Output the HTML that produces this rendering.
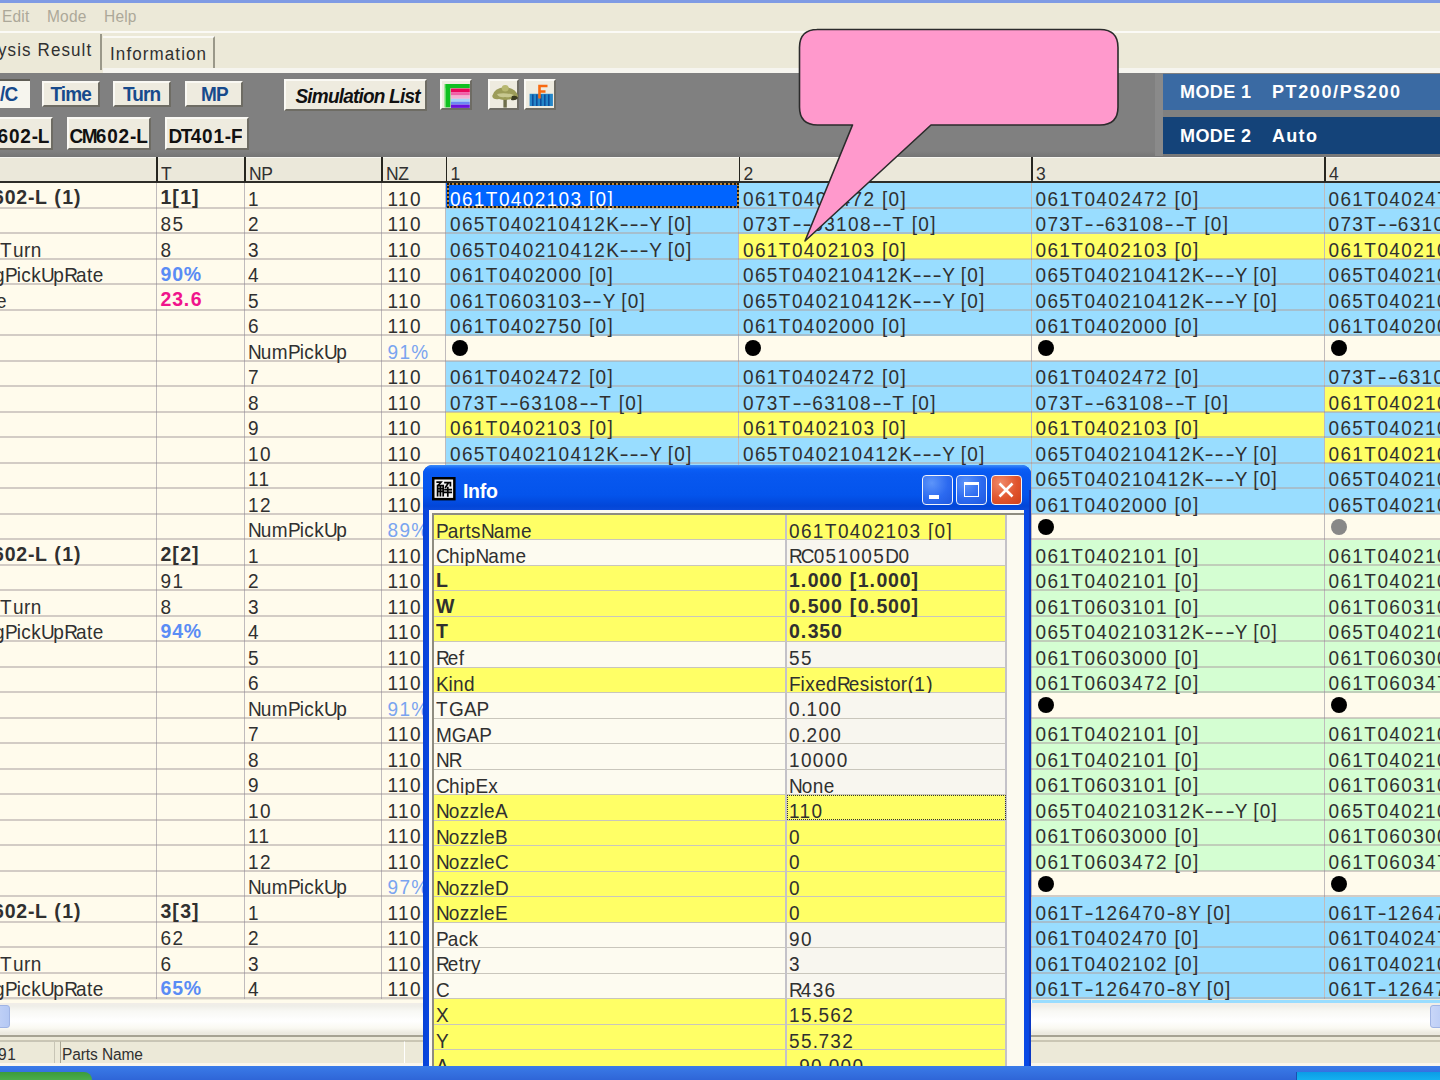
<!DOCTYPE html><html><head><meta charset="utf-8"><style>
*{margin:0;padding:0;box-sizing:border-box}
html,body{width:1440px;height:1080px;overflow:hidden;background:#ECE9D8;font-family:"Liberation Sans", sans-serif;}
.ab{position:absolute}
.t{position:absolute;white-space:pre;font-size:19px;letter-spacing:0;color:#303030;line-height:20px;transform:scaleY(1.06);transform-origin:0 16px}
.b{font-weight:bold;letter-spacing:0.3px;font-size:19.5px;margin-top:-2.5px}
.h{display:inline-block;width:10.2px;text-align:center;transform:scaleX(1.45)}
.btn{position:absolute;background:#EEEBDF;border-top:2px solid #FAF9F4;border-left:2px solid #FAF9F4;border-right:2px solid #6E6C64;border-bottom:2px solid #6E6C64;}
</style></head><body>
<div class="ab" style="left:0;top:0;width:1440px;height:3px;background:#7F9BE4"></div>
<div class="t" style="left:2px;top:7px;color:#ACA899;font-size:15.5px;letter-spacing:0.2px">Edit</div>
<div class="t" style="left:47px;top:7px;color:#ACA899;font-size:15.5px;letter-spacing:0.2px">Mode</div>
<div class="t" style="left:104px;top:7px;color:#ACA899;font-size:15.5px;letter-spacing:0.2px">Help</div>
<div class="ab" style="left:0;top:31px;width:1440px;height:2px;background:#FBFAF6"></div>
<div class="ab" style="left:103px;top:68px;width:1337px;height:4.5px;background:#F6F5EF"></div>
<div class="ab" style="left:100px;top:34px;width:2px;height:36px;background:#9A9889"></div>
<div class="t" style="left:-2px;top:41.2px;font-size:17px;letter-spacing:1.1px">ysis Result</div>
<div class="ab" style="left:103px;top:36px;width:112px;height:32px;border-top:2px solid #FAF9F4;border-right:2px solid #9A9889;"></div>
<div class="t" style="left:110px;top:44.5px;font-size:17px;letter-spacing:1.1px">Information</div>
<div class="ab" style="left:0;top:73px;width:1440px;height:83.5px;background:linear-gradient(#808080 0px,#808080 78px,#767676 83.5px)"></div>
<div class="ab" style="left:-4px;top:79px;width:33.5px;height:28.5px;background:#F6F5EE;border-top:2px solid #5F5D55;border-left:2px solid #5F5D55;"></div>
<div class="btn" style="left:41.5px;top:81px;width:58px;height:26px"></div>
<div class="btn" style="left:113px;top:81px;width:58px;height:26px"></div>
<div class="btn" style="left:185px;top:81px;width:58px;height:26px"></div>
<div class="btn" style="left:283.5px;top:79px;width:143.5px;height:31.5px"></div>
<div class="btn" style="left:439.7px;top:79.2px;width:32px;height:31px"></div>
<div class="btn" style="left:487.8px;top:79.2px;width:31.6px;height:31px"></div>
<div class="btn" style="left:523.8px;top:79.2px;width:32.5px;height:31px"></div>
<div class="btn" style="left:-20px;top:117px;width:73px;height:32.5px"></div>
<div class="btn" style="left:67px;top:117px;width:84px;height:32.5px"></div>
<div class="btn" style="left:165px;top:117px;width:84px;height:32.5px"></div>
<div class="t b" style="left:0px;top:87.5px;color:#174A8C;font-size:19px;letter-spacing:-0.9px;">/C</div>
<div class="t b" style="left:50.5px;top:87.5px;color:#174A8C;font-size:19px;letter-spacing:-0.9px;">Time</div>
<div class="t b" style="left:123px;top:87.5px;color:#174A8C;font-size:19px;letter-spacing:-0.9px;">Turn</div>
<div class="t b" style="left:201px;top:87.5px;color:#174A8C;font-size:19px;letter-spacing:-0.9px;">MP</div>
<div class="t b" style="left:295.5px;top:89.0px;color:#111;font-size:19px;letter-spacing:-0.9px;font-style:italic;letter-spacing:-0.8px">Simulation List</div>
<div class="t b" style="left:-2.5px;top:129px;color:#111;font-size:19px;letter-spacing:-0.9px;"><span style="letter-spacing:0.8px">6</span><span style="letter-spacing:0.8px">0</span><span style="letter-spacing:0.8px">2</span><span style="letter-spacing:-0.2px">-</span><span style="letter-spacing:-1.6px">L</span></div>
<div class="t b" style="left:69.5px;top:129px;color:#111;font-size:19px;letter-spacing:-0.9px;"><span style="letter-spacing:-1.6px">C</span><span style="letter-spacing:-1.6px">M</span><span style="letter-spacing:0.8px">6</span><span style="letter-spacing:0.8px">0</span><span style="letter-spacing:0.8px">2</span><span style="letter-spacing:-0.2px">-</span><span style="letter-spacing:-1.6px">L</span></div>
<div class="t b" style="left:168.5px;top:129px;color:#111;font-size:19px;letter-spacing:-0.9px;"><span style="letter-spacing:-1.6px">D</span><span style="letter-spacing:-1.6px">T</span><span style="letter-spacing:0.8px">4</span><span style="letter-spacing:0.8px">0</span><span style="letter-spacing:0.8px">1</span><span style="letter-spacing:-0.2px">-</span><span style="letter-spacing:-1.6px">F</span></div>
<svg class="ab" style="left:0;top:0" width="600" height="120" viewBox="0 0 600 120">
<rect x="445" y="84" width="24.8" height="4.2" fill="#10C020"/>
<rect x="445.5" y="84" width="4.9" height="23.4" fill="#10C020"/>
<rect x="444.5" y="84" width="1.2" height="23.4" fill="#60E060"/>
<rect x="450.9" y="88.5" width="18.9" height="3.6" fill="#E8085C"/>
<rect x="450.9" y="92.1" width="18.9" height="3.4" fill="#F060A8"/>
<rect x="450.9" y="95.5" width="18.9" height="3.3" fill="#F4B0D4"/>
<rect x="450.9" y="98.8" width="18.9" height="2.9" fill="#A8D4F8"/>
<rect x="450.9" y="101.7" width="18.9" height="3" fill="#6C88F4"/>
<rect x="450.9" y="104.7" width="18.9" height="3.2" fill="#6A12DC"/>
<rect x="503.4" y="98" width="3.4" height="9.6" fill="#6E6E4A"/>
<path d="M492.2,96 Q494,88 505,87 Q516,88 518,96 Q517,100 511,99 Q505,101 499,99 Q493,100 492.2,96 Z" fill="#9C9C58"/>
<path d="M497,94 Q505,92 514,95 Q511,98 505,97 Q499,98 497,94 Z" fill="#C8C890"/>
<path d="M512,96 Q517,95 518,98 Q516,101 511,100 Z" fill="#3A3A20"/>
<ellipse cx="505.2" cy="88.2" rx="3.4" ry="3.2" fill="#B8B870"/>
<rect x="529.6" y="93.8" width="23.3" height="12.2" fill="#2486C8"/>
<g fill="#0E4E9C"><rect x="532" y="94.5" width="1.6" height="11.5"/><rect x="536" y="94.5" width="1.6" height="11.5"/><rect x="540" y="94.5" width="1.6" height="11.5"/><rect x="544" y="94.5" width="1.6" height="11.5"/><rect x="548" y="94.5" width="1.6" height="11.5"/></g>
<path d="M539.5,98.5 V86 H547.5 M539.5,91.5 H545.5" stroke="#F86A10" stroke-width="2.6" fill="none"/>
</svg>
<div class="ab" style="left:1155px;top:73px;width:8px;height:83px;background:#8A8A8A"></div>
<div class="ab" style="left:1163px;top:73.5px;width:277px;height:36.5px;background:#3A6AA3"></div>
<div class="ab" style="left:1163px;top:117px;width:277px;height:36.75px;background:#144379"></div>
<div class="t b" style="left:1180px;top:84.5px;color:#fff;font-size:18px;letter-spacing:0.4px">MODE 1</div>
<div class="t b" style="left:1272px;top:84.5px;color:#fff;font-size:18px;letter-spacing:1.6px">PT200/PS200</div>
<div class="t b" style="left:1180px;top:128px;color:#fff;font-size:18px;letter-spacing:0.4px">MODE 2</div>
<div class="t b" style="left:1272px;top:128px;color:#fff;font-size:18px;letter-spacing:1.3px">Auto</div>
<div class="ab" style="left:0;top:156.5px;width:1440px;height:26px;background:#EBE8DA;border-top:1px solid #F7F6F0"></div>
<div class="ab" style="left:0;top:181px;width:1440px;height:2px;background:#2E2D28"></div>
<div class="ab" style="left:156.0px;top:157px;width:1.5px;height:25px;background:#26251F"></div>
<div class="t" style="left:161.0px;top:163.5px;font-size:17.5px;letter-spacing:-0.3px">T</div>
<div class="ab" style="left:244.0px;top:157px;width:1.5px;height:25px;background:#26251F"></div>
<div class="t" style="left:249.0px;top:163.5px;font-size:17.5px;letter-spacing:-0.3px">NP</div>
<div class="ab" style="left:381.0px;top:157px;width:1.5px;height:25px;background:#26251F"></div>
<div class="t" style="left:386.0px;top:163.5px;font-size:17.5px;letter-spacing:-0.3px">NZ</div>
<div class="ab" style="left:445.5px;top:157px;width:1.5px;height:25px;background:#26251F"></div>
<div class="t" style="left:450.5px;top:163.5px;font-size:17.5px;letter-spacing:-0.3px">1</div>
<div class="ab" style="left:738.5px;top:157px;width:1.5px;height:25px;background:#26251F"></div>
<div class="t" style="left:743.5px;top:163.5px;font-size:17.5px;letter-spacing:-0.3px">2</div>
<div class="ab" style="left:1031.0px;top:157px;width:1.5px;height:25px;background:#26251F"></div>
<div class="t" style="left:1036.0px;top:163.5px;font-size:17.5px;letter-spacing:-0.3px">3</div>
<div class="ab" style="left:1324.0px;top:157px;width:1.5px;height:25px;background:#26251F"></div>
<div class="t" style="left:1329.0px;top:163.5px;font-size:17.5px;letter-spacing:-0.3px">4</div>
<div class="ab" style="left:0;top:183px;width:1440px;height:816px;background:#FFFBEC"></div>
<div class="ab" style="left:446px;top:182.5px;width:292px;height:25.5px;background:#0064FF"></div>
<div class="ab" style="left:446px;top:208.0px;width:292px;height:25.5px;background:#99DDFF"></div>
<div class="ab" style="left:446px;top:233.5px;width:292px;height:25.5px;background:#99DDFF"></div>
<div class="ab" style="left:446px;top:259.0px;width:292px;height:25.5px;background:#99DDFF"></div>
<div class="ab" style="left:446px;top:284.5px;width:292px;height:25.5px;background:#99DDFF"></div>
<div class="ab" style="left:446px;top:310.0px;width:292px;height:25.5px;background:#99DDFF"></div>
<div class="ab" style="left:446px;top:361.0px;width:292px;height:25.5px;background:#99DDFF"></div>
<div class="ab" style="left:446px;top:386.5px;width:292px;height:25.5px;background:#99DDFF"></div>
<div class="ab" style="left:446px;top:412.0px;width:292px;height:25.5px;background:#FFFF66"></div>
<div class="ab" style="left:446px;top:437.5px;width:292px;height:25.5px;background:#99DDFF"></div>
<div class="ab" style="left:446px;top:463.0px;width:292px;height:25.5px;background:#99DDFF"></div>
<div class="ab" style="left:739px;top:182.5px;width:292px;height:25.5px;background:#99DDFF"></div>
<div class="ab" style="left:739px;top:208.0px;width:292px;height:25.5px;background:#99DDFF"></div>
<div class="ab" style="left:739px;top:233.5px;width:292px;height:25.5px;background:#FFFF66"></div>
<div class="ab" style="left:739px;top:259.0px;width:292px;height:25.5px;background:#99DDFF"></div>
<div class="ab" style="left:739px;top:284.5px;width:292px;height:25.5px;background:#99DDFF"></div>
<div class="ab" style="left:739px;top:310.0px;width:292px;height:25.5px;background:#99DDFF"></div>
<div class="ab" style="left:739px;top:361.0px;width:292px;height:25.5px;background:#99DDFF"></div>
<div class="ab" style="left:739px;top:386.5px;width:292px;height:25.5px;background:#99DDFF"></div>
<div class="ab" style="left:739px;top:412.0px;width:292px;height:25.5px;background:#FFFF66"></div>
<div class="ab" style="left:739px;top:437.5px;width:292px;height:25.5px;background:#99DDFF"></div>
<div class="ab" style="left:739px;top:463.0px;width:292px;height:25.5px;background:#99DDFF"></div>
<div class="ab" style="left:1032px;top:182.5px;width:292px;height:25.5px;background:#99DDFF"></div>
<div class="ab" style="left:1032px;top:208.0px;width:292px;height:25.5px;background:#99DDFF"></div>
<div class="ab" style="left:1032px;top:233.5px;width:292px;height:25.5px;background:#FFFF66"></div>
<div class="ab" style="left:1032px;top:259.0px;width:292px;height:25.5px;background:#99DDFF"></div>
<div class="ab" style="left:1032px;top:284.5px;width:292px;height:25.5px;background:#99DDFF"></div>
<div class="ab" style="left:1032px;top:310.0px;width:292px;height:25.5px;background:#99DDFF"></div>
<div class="ab" style="left:1032px;top:361.0px;width:292px;height:25.5px;background:#99DDFF"></div>
<div class="ab" style="left:1032px;top:386.5px;width:292px;height:25.5px;background:#99DDFF"></div>
<div class="ab" style="left:1032px;top:412.0px;width:292px;height:25.5px;background:#FFFF66"></div>
<div class="ab" style="left:1032px;top:437.5px;width:292px;height:25.5px;background:#99DDFF"></div>
<div class="ab" style="left:1032px;top:463.0px;width:292px;height:25.5px;background:#99DDFF"></div>
<div class="ab" style="left:1032px;top:488.5px;width:292px;height:25.5px;background:#99DDFF"></div>
<div class="ab" style="left:1032px;top:539.5px;width:292px;height:25.5px;background:#D4FED2"></div>
<div class="ab" style="left:1032px;top:565.0px;width:292px;height:25.5px;background:#D4FED2"></div>
<div class="ab" style="left:1032px;top:590.5px;width:292px;height:25.5px;background:#D4FED2"></div>
<div class="ab" style="left:1032px;top:616.0px;width:292px;height:25.5px;background:#D4FED2"></div>
<div class="ab" style="left:1032px;top:641.5px;width:292px;height:25.5px;background:#D4FED2"></div>
<div class="ab" style="left:1032px;top:667.0px;width:292px;height:25.5px;background:#D4FED2"></div>
<div class="ab" style="left:1032px;top:718.0px;width:292px;height:25.5px;background:#D4FED2"></div>
<div class="ab" style="left:1032px;top:743.5px;width:292px;height:25.5px;background:#D4FED2"></div>
<div class="ab" style="left:1032px;top:769.0px;width:292px;height:25.5px;background:#D4FED2"></div>
<div class="ab" style="left:1032px;top:794.5px;width:292px;height:25.5px;background:#D4FED2"></div>
<div class="ab" style="left:1032px;top:820.0px;width:292px;height:25.5px;background:#D4FED2"></div>
<div class="ab" style="left:1032px;top:845.5px;width:292px;height:25.5px;background:#D4FED2"></div>
<div class="ab" style="left:1032px;top:896.5px;width:292px;height:25.5px;background:#99DDFF"></div>
<div class="ab" style="left:1032px;top:922.0px;width:292px;height:25.5px;background:#99DDFF"></div>
<div class="ab" style="left:1032px;top:947.5px;width:292px;height:25.5px;background:#99DDFF"></div>
<div class="ab" style="left:1032px;top:973.0px;width:292px;height:25.5px;background:#99DDFF"></div>
<div class="ab" style="left:1325px;top:182.5px;width:115px;height:25.5px;background:#99DDFF"></div>
<div class="ab" style="left:1325px;top:208.0px;width:115px;height:25.5px;background:#99DDFF"></div>
<div class="ab" style="left:1325px;top:233.5px;width:115px;height:25.5px;background:#FFFF66"></div>
<div class="ab" style="left:1325px;top:259.0px;width:115px;height:25.5px;background:#99DDFF"></div>
<div class="ab" style="left:1325px;top:284.5px;width:115px;height:25.5px;background:#99DDFF"></div>
<div class="ab" style="left:1325px;top:310.0px;width:115px;height:25.5px;background:#99DDFF"></div>
<div class="ab" style="left:1325px;top:361.0px;width:115px;height:25.5px;background:#99DDFF"></div>
<div class="ab" style="left:1325px;top:386.5px;width:115px;height:25.5px;background:#FFFF66"></div>
<div class="ab" style="left:1325px;top:412.0px;width:115px;height:25.5px;background:#99DDFF"></div>
<div class="ab" style="left:1325px;top:437.5px;width:115px;height:25.5px;background:#FFFF66"></div>
<div class="ab" style="left:1325px;top:463.0px;width:115px;height:25.5px;background:#99DDFF"></div>
<div class="ab" style="left:1325px;top:488.5px;width:115px;height:25.5px;background:#99DDFF"></div>
<div class="ab" style="left:1325px;top:539.5px;width:115px;height:25.5px;background:#D4FED2"></div>
<div class="ab" style="left:1325px;top:565.0px;width:115px;height:25.5px;background:#D4FED2"></div>
<div class="ab" style="left:1325px;top:590.5px;width:115px;height:25.5px;background:#D4FED2"></div>
<div class="ab" style="left:1325px;top:616.0px;width:115px;height:25.5px;background:#D4FED2"></div>
<div class="ab" style="left:1325px;top:641.5px;width:115px;height:25.5px;background:#D4FED2"></div>
<div class="ab" style="left:1325px;top:667.0px;width:115px;height:25.5px;background:#D4FED2"></div>
<div class="ab" style="left:1325px;top:718.0px;width:115px;height:25.5px;background:#D4FED2"></div>
<div class="ab" style="left:1325px;top:743.5px;width:115px;height:25.5px;background:#D4FED2"></div>
<div class="ab" style="left:1325px;top:769.0px;width:115px;height:25.5px;background:#D4FED2"></div>
<div class="ab" style="left:1325px;top:794.5px;width:115px;height:25.5px;background:#D4FED2"></div>
<div class="ab" style="left:1325px;top:820.0px;width:115px;height:25.5px;background:#D4FED2"></div>
<div class="ab" style="left:1325px;top:845.5px;width:115px;height:25.5px;background:#D4FED2"></div>
<div class="ab" style="left:1325px;top:896.5px;width:115px;height:25.5px;background:#99DDFF"></div>
<div class="ab" style="left:1325px;top:922.0px;width:115px;height:25.5px;background:#99DDFF"></div>
<div class="ab" style="left:1325px;top:947.5px;width:115px;height:25.5px;background:#99DDFF"></div>
<div class="ab" style="left:1325px;top:973.0px;width:115px;height:25.5px;background:#99DDFF"></div>
<div class="ab" style="left:0;top:207px;width:1440px;height:2px;background:rgba(175,165,165,0.55)"></div>
<div class="ab" style="left:0;top:232px;width:1440px;height:2px;background:rgba(175,165,165,0.55)"></div>
<div class="ab" style="left:0;top:258px;width:1440px;height:2px;background:rgba(175,165,165,0.55)"></div>
<div class="ab" style="left:0;top:283px;width:1440px;height:2px;background:rgba(175,165,165,0.55)"></div>
<div class="ab" style="left:0;top:309px;width:1440px;height:2px;background:rgba(175,165,165,0.55)"></div>
<div class="ab" style="left:0;top:334px;width:1440px;height:2px;background:rgba(175,165,165,0.55)"></div>
<div class="ab" style="left:0;top:360px;width:1440px;height:2px;background:rgba(175,165,165,0.55)"></div>
<div class="ab" style="left:0;top:385px;width:1440px;height:2px;background:rgba(175,165,165,0.55)"></div>
<div class="ab" style="left:0;top:411px;width:1440px;height:2px;background:rgba(175,165,165,0.55)"></div>
<div class="ab" style="left:0;top:436px;width:1440px;height:2px;background:rgba(175,165,165,0.55)"></div>
<div class="ab" style="left:0;top:462px;width:1440px;height:2px;background:rgba(175,165,165,0.55)"></div>
<div class="ab" style="left:0;top:487px;width:1440px;height:2px;background:rgba(175,165,165,0.55)"></div>
<div class="ab" style="left:0;top:513px;width:1440px;height:2px;background:rgba(175,165,165,0.55)"></div>
<div class="ab" style="left:0;top:538px;width:1440px;height:2px;background:rgba(175,165,165,0.55)"></div>
<div class="ab" style="left:0;top:564px;width:1440px;height:2px;background:rgba(175,165,165,0.55)"></div>
<div class="ab" style="left:0;top:589px;width:1440px;height:2px;background:rgba(175,165,165,0.55)"></div>
<div class="ab" style="left:0;top:615px;width:1440px;height:2px;background:rgba(175,165,165,0.55)"></div>
<div class="ab" style="left:0;top:640px;width:1440px;height:2px;background:rgba(175,165,165,0.55)"></div>
<div class="ab" style="left:0;top:666px;width:1440px;height:2px;background:rgba(175,165,165,0.55)"></div>
<div class="ab" style="left:0;top:691px;width:1440px;height:2px;background:rgba(175,165,165,0.55)"></div>
<div class="ab" style="left:0;top:717px;width:1440px;height:2px;background:rgba(175,165,165,0.55)"></div>
<div class="ab" style="left:0;top:742px;width:1440px;height:2px;background:rgba(175,165,165,0.55)"></div>
<div class="ab" style="left:0;top:768px;width:1440px;height:2px;background:rgba(175,165,165,0.55)"></div>
<div class="ab" style="left:0;top:793px;width:1440px;height:2px;background:rgba(175,165,165,0.55)"></div>
<div class="ab" style="left:0;top:819px;width:1440px;height:2px;background:rgba(175,165,165,0.55)"></div>
<div class="ab" style="left:0;top:844px;width:1440px;height:2px;background:rgba(175,165,165,0.55)"></div>
<div class="ab" style="left:0;top:870px;width:1440px;height:2px;background:rgba(175,165,165,0.55)"></div>
<div class="ab" style="left:0;top:895px;width:1440px;height:2px;background:rgba(175,165,165,0.55)"></div>
<div class="ab" style="left:0;top:921px;width:1440px;height:2px;background:rgba(175,165,165,0.55)"></div>
<div class="ab" style="left:0;top:946px;width:1440px;height:2px;background:rgba(175,165,165,0.55)"></div>
<div class="ab" style="left:0;top:972px;width:1440px;height:2px;background:rgba(175,165,165,0.55)"></div>
<div class="ab" style="left:0;top:997px;width:1440px;height:2px;background:rgba(175,165,165,0.55)"></div>
<div class="ab" style="left:156px;top:183px;width:1px;height:816px;background:rgba(140,135,150,0.55)"></div>
<div class="ab" style="left:244px;top:183px;width:1px;height:816px;background:rgba(140,135,150,0.55)"></div>
<div class="ab" style="left:381px;top:183px;width:1px;height:816px;background:rgba(140,135,150,0.55)"></div>
<div class="ab" style="left:445px;top:183px;width:1px;height:816px;background:rgba(140,135,150,0.55)"></div>
<div class="ab" style="left:738px;top:183px;width:1px;height:816px;background:rgba(140,135,150,0.55)"></div>
<div class="ab" style="left:1031px;top:183px;width:1px;height:816px;background:rgba(140,135,150,0.55)"></div>
<div class="ab" style="left:1324px;top:183px;width:1px;height:816px;background:rgba(140,135,150,0.55)"></div>
<div class="t b" style="left:-7px;top:189.7px;"><span style="letter-spacing:0.8px">602</span><span style="letter-spacing:0.5px">-</span>L<span style="letter-spacing:1.6px"> (</span><span style="letter-spacing:0.8px">1</span><span style="letter-spacing:1.6px">)</span></div>
<div class="t b" style="left:160.5px;top:189.7px;"><span style="letter-spacing:0.8px">1</span><span style="letter-spacing:1.6px">[</span><span style="letter-spacing:0.8px">1</span><span style="letter-spacing:1.6px">]</span></div>
<div class="t" style="left:248px;top:189.7px;"><span style="letter-spacing:1.35px">1</span></div>
<div class="t" style="left:387.5px;top:189.7px;"><span style="letter-spacing:1.35px">110</span></div>
<div class="t" style="left:160.5px;top:215.2px;"><span style="letter-spacing:1.35px">85</span></div>
<div class="t" style="left:248px;top:215.2px;"><span style="letter-spacing:1.35px">2</span></div>
<div class="t" style="left:387.5px;top:215.2px;"><span style="letter-spacing:1.35px">110</span></div>
<div class="t" style="left:0px;top:240.7px;"><span style="letter-spacing:1.5px">T</span><span style="letter-spacing:0.4px">urn</span></div>
<div class="t" style="left:160.5px;top:240.7px;"><span style="letter-spacing:1.35px">8</span></div>
<div class="t" style="left:248px;top:240.7px;"><span style="letter-spacing:1.35px">3</span></div>
<div class="t" style="left:387.5px;top:240.7px;"><span style="letter-spacing:1.35px">110</span></div>
<div class="t" style="left:-6px;top:266.2px;"><span style="letter-spacing:0.4px">g</span><span style="letter-spacing:-1px">P</span><span style="letter-spacing:0.4px">ick</span><span style="letter-spacing:-1.5px">U</span><span style="letter-spacing:0.4px">p</span><span style="letter-spacing:-2px">R</span><span style="letter-spacing:0.4px">ate</span></div>
<div class="t b" style="left:160.5px;top:266.2px;color:#5A8CF5;"><span style="letter-spacing:0.8px">90</span><span style="letter-spacing:1.6px">%</span></div>
<div class="t" style="left:248px;top:266.2px;"><span style="letter-spacing:1.35px">4</span></div>
<div class="t" style="left:387.5px;top:266.2px;"><span style="letter-spacing:1.35px">110</span></div>
<div class="t" style="left:-4px;top:291.7px;"><span style="letter-spacing:0.4px">e</span></div>
<div class="t b" style="left:160.5px;top:291.7px;color:#F0148C;"><span style="letter-spacing:0.8px">23</span><span style="letter-spacing:1.6px">.</span><span style="letter-spacing:0.8px">6</span></div>
<div class="t" style="left:248px;top:291.7px;"><span style="letter-spacing:1.35px">5</span></div>
<div class="t" style="left:387.5px;top:291.7px;"><span style="letter-spacing:1.35px">110</span></div>
<div class="t" style="left:248px;top:317.2px;"><span style="letter-spacing:1.35px">6</span></div>
<div class="t" style="left:387.5px;top:317.2px;"><span style="letter-spacing:1.35px">110</span></div>
<div class="t" style="left:248px;top:342.7px;"><span style="letter-spacing:-1px">N</span><span style="letter-spacing:0.4px">um</span><span style="letter-spacing:-1px">P</span><span style="letter-spacing:0.4px">ick</span><span style="letter-spacing:-1.5px">U</span><span style="letter-spacing:0.4px">p</span></div>
<div class="t" style="left:387.5px;top:342.7px;color:#7AA4F0"><span style="letter-spacing:1.35px">91</span><span style="letter-spacing:0.3px">%</span></div>
<div class="t" style="left:248px;top:368.2px;"><span style="letter-spacing:1.35px">7</span></div>
<div class="t" style="left:387.5px;top:368.2px;"><span style="letter-spacing:1.35px">110</span></div>
<div class="t" style="left:248px;top:393.7px;"><span style="letter-spacing:1.35px">8</span></div>
<div class="t" style="left:387.5px;top:393.7px;"><span style="letter-spacing:1.35px">110</span></div>
<div class="t" style="left:248px;top:419.2px;"><span style="letter-spacing:1.35px">9</span></div>
<div class="t" style="left:387.5px;top:419.2px;"><span style="letter-spacing:1.35px">110</span></div>
<div class="t" style="left:248px;top:444.7px;"><span style="letter-spacing:1.35px">10</span></div>
<div class="t" style="left:387.5px;top:444.7px;"><span style="letter-spacing:1.35px">110</span></div>
<div class="t" style="left:248px;top:470.2px;"><span style="letter-spacing:1.35px">11</span></div>
<div class="t" style="left:387.5px;top:470.2px;"><span style="letter-spacing:1.35px">110</span></div>
<div class="t" style="left:248px;top:495.7px;"><span style="letter-spacing:1.35px">12</span></div>
<div class="t" style="left:387.5px;top:495.7px;"><span style="letter-spacing:1.35px">110</span></div>
<div class="t" style="left:248px;top:521.2px;"><span style="letter-spacing:-1px">N</span><span style="letter-spacing:0.4px">um</span><span style="letter-spacing:-1px">P</span><span style="letter-spacing:0.4px">ick</span><span style="letter-spacing:-1.5px">U</span><span style="letter-spacing:0.4px">p</span></div>
<div class="t" style="left:387.5px;top:521.2px;color:#7AA4F0"><span style="letter-spacing:1.35px">89</span><span style="letter-spacing:0.3px">%</span></div>
<div class="t b" style="left:-7px;top:546.7px;"><span style="letter-spacing:0.8px">602</span><span style="letter-spacing:0.5px">-</span>L<span style="letter-spacing:1.6px"> (</span><span style="letter-spacing:0.8px">1</span><span style="letter-spacing:1.6px">)</span></div>
<div class="t b" style="left:160.5px;top:546.7px;"><span style="letter-spacing:0.8px">2</span><span style="letter-spacing:1.6px">[</span><span style="letter-spacing:0.8px">2</span><span style="letter-spacing:1.6px">]</span></div>
<div class="t" style="left:248px;top:546.7px;"><span style="letter-spacing:1.35px">1</span></div>
<div class="t" style="left:387.5px;top:546.7px;"><span style="letter-spacing:1.35px">110</span></div>
<div class="t" style="left:160.5px;top:572.2px;"><span style="letter-spacing:1.35px">91</span></div>
<div class="t" style="left:248px;top:572.2px;"><span style="letter-spacing:1.35px">2</span></div>
<div class="t" style="left:387.5px;top:572.2px;"><span style="letter-spacing:1.35px">110</span></div>
<div class="t" style="left:0px;top:597.7px;"><span style="letter-spacing:1.5px">T</span><span style="letter-spacing:0.4px">urn</span></div>
<div class="t" style="left:160.5px;top:597.7px;"><span style="letter-spacing:1.35px">8</span></div>
<div class="t" style="left:248px;top:597.7px;"><span style="letter-spacing:1.35px">3</span></div>
<div class="t" style="left:387.5px;top:597.7px;"><span style="letter-spacing:1.35px">110</span></div>
<div class="t" style="left:-6px;top:623.2px;"><span style="letter-spacing:0.4px">g</span><span style="letter-spacing:-1px">P</span><span style="letter-spacing:0.4px">ick</span><span style="letter-spacing:-1.5px">U</span><span style="letter-spacing:0.4px">p</span><span style="letter-spacing:-2px">R</span><span style="letter-spacing:0.4px">ate</span></div>
<div class="t b" style="left:160.5px;top:623.2px;color:#5A8CF5;"><span style="letter-spacing:0.8px">94</span><span style="letter-spacing:1.6px">%</span></div>
<div class="t" style="left:248px;top:623.2px;"><span style="letter-spacing:1.35px">4</span></div>
<div class="t" style="left:387.5px;top:623.2px;"><span style="letter-spacing:1.35px">110</span></div>
<div class="t" style="left:248px;top:648.7px;"><span style="letter-spacing:1.35px">5</span></div>
<div class="t" style="left:387.5px;top:648.7px;"><span style="letter-spacing:1.35px">110</span></div>
<div class="t" style="left:248px;top:674.2px;"><span style="letter-spacing:1.35px">6</span></div>
<div class="t" style="left:387.5px;top:674.2px;"><span style="letter-spacing:1.35px">110</span></div>
<div class="t" style="left:248px;top:699.7px;"><span style="letter-spacing:-1px">N</span><span style="letter-spacing:0.4px">um</span><span style="letter-spacing:-1px">P</span><span style="letter-spacing:0.4px">ick</span><span style="letter-spacing:-1.5px">U</span><span style="letter-spacing:0.4px">p</span></div>
<div class="t" style="left:387.5px;top:699.7px;color:#7AA4F0"><span style="letter-spacing:1.35px">91</span><span style="letter-spacing:0.3px">%</span></div>
<div class="t" style="left:248px;top:725.2px;"><span style="letter-spacing:1.35px">7</span></div>
<div class="t" style="left:387.5px;top:725.2px;"><span style="letter-spacing:1.35px">110</span></div>
<div class="t" style="left:248px;top:750.7px;"><span style="letter-spacing:1.35px">8</span></div>
<div class="t" style="left:387.5px;top:750.7px;"><span style="letter-spacing:1.35px">110</span></div>
<div class="t" style="left:248px;top:776.2px;"><span style="letter-spacing:1.35px">9</span></div>
<div class="t" style="left:387.5px;top:776.2px;"><span style="letter-spacing:1.35px">110</span></div>
<div class="t" style="left:248px;top:801.7px;"><span style="letter-spacing:1.35px">10</span></div>
<div class="t" style="left:387.5px;top:801.7px;"><span style="letter-spacing:1.35px">110</span></div>
<div class="t" style="left:248px;top:827.2px;"><span style="letter-spacing:1.35px">11</span></div>
<div class="t" style="left:387.5px;top:827.2px;"><span style="letter-spacing:1.35px">110</span></div>
<div class="t" style="left:248px;top:852.7px;"><span style="letter-spacing:1.35px">12</span></div>
<div class="t" style="left:387.5px;top:852.7px;"><span style="letter-spacing:1.35px">110</span></div>
<div class="t" style="left:248px;top:878.2px;"><span style="letter-spacing:-1px">N</span><span style="letter-spacing:0.4px">um</span><span style="letter-spacing:-1px">P</span><span style="letter-spacing:0.4px">ick</span><span style="letter-spacing:-1.5px">U</span><span style="letter-spacing:0.4px">p</span></div>
<div class="t" style="left:387.5px;top:878.2px;color:#7AA4F0"><span style="letter-spacing:1.35px">97</span><span style="letter-spacing:0.3px">%</span></div>
<div class="t b" style="left:-7px;top:903.7px;"><span style="letter-spacing:0.8px">602</span><span style="letter-spacing:0.5px">-</span>L<span style="letter-spacing:1.6px"> (</span><span style="letter-spacing:0.8px">1</span><span style="letter-spacing:1.6px">)</span></div>
<div class="t b" style="left:160.5px;top:903.7px;"><span style="letter-spacing:0.8px">3</span><span style="letter-spacing:1.6px">[</span><span style="letter-spacing:0.8px">3</span><span style="letter-spacing:1.6px">]</span></div>
<div class="t" style="left:248px;top:903.7px;"><span style="letter-spacing:1.35px">1</span></div>
<div class="t" style="left:387.5px;top:903.7px;"><span style="letter-spacing:1.35px">110</span></div>
<div class="t" style="left:160.5px;top:929.2px;"><span style="letter-spacing:1.35px">62</span></div>
<div class="t" style="left:248px;top:929.2px;"><span style="letter-spacing:1.35px">2</span></div>
<div class="t" style="left:387.5px;top:929.2px;"><span style="letter-spacing:1.35px">110</span></div>
<div class="t" style="left:0px;top:954.7px;"><span style="letter-spacing:1.5px">T</span><span style="letter-spacing:0.4px">urn</span></div>
<div class="t" style="left:160.5px;top:954.7px;"><span style="letter-spacing:1.35px">6</span></div>
<div class="t" style="left:248px;top:954.7px;"><span style="letter-spacing:1.35px">3</span></div>
<div class="t" style="left:387.5px;top:954.7px;"><span style="letter-spacing:1.35px">110</span></div>
<div class="t" style="left:-6px;top:980.2px;"><span style="letter-spacing:0.4px">g</span><span style="letter-spacing:-1px">P</span><span style="letter-spacing:0.4px">ick</span><span style="letter-spacing:-1.5px">U</span><span style="letter-spacing:0.4px">p</span><span style="letter-spacing:-2px">R</span><span style="letter-spacing:0.4px">ate</span></div>
<div class="t b" style="left:160.5px;top:980.2px;color:#5A8CF5;"><span style="letter-spacing:0.8px">65</span><span style="letter-spacing:1.6px">%</span></div>
<div class="t" style="left:248px;top:980.2px;"><span style="letter-spacing:1.35px">4</span></div>
<div class="t" style="left:387.5px;top:980.2px;"><span style="letter-spacing:1.35px">110</span></div>
<div class="t" style="left:450px;top:189.7px;color:#fff"><span style="letter-spacing:1.35px">061</span><span style="letter-spacing:1.5px">T</span><span style="letter-spacing:1.35px">0402103</span><span style="letter-spacing:1.5px"> </span><span style="letter-spacing:1.2px">[</span><span style="letter-spacing:1.35px">0</span><span style="letter-spacing:0.3px">]</span></div>
<div class="t" style="left:450px;top:215.2px;color:#303030"><span style="letter-spacing:1.35px">065</span><span style="letter-spacing:1.5px">T</span><span style="letter-spacing:1.35px">040210412</span><span style="letter-spacing:-0.2px">K</span><span class="h">-</span><span class="h">-</span><span class="h">-</span><span style="letter-spacing:-1px">Y</span><span style="letter-spacing:1.5px"> </span><span style="letter-spacing:1.2px">[</span><span style="letter-spacing:1.35px">0</span><span style="letter-spacing:0.3px">]</span></div>
<div class="t" style="left:450px;top:240.7px;color:#303030"><span style="letter-spacing:1.35px">065</span><span style="letter-spacing:1.5px">T</span><span style="letter-spacing:1.35px">040210412</span><span style="letter-spacing:-0.2px">K</span><span class="h">-</span><span class="h">-</span><span class="h">-</span><span style="letter-spacing:-1px">Y</span><span style="letter-spacing:1.5px"> </span><span style="letter-spacing:1.2px">[</span><span style="letter-spacing:1.35px">0</span><span style="letter-spacing:0.3px">]</span></div>
<div class="t" style="left:450px;top:266.2px;color:#303030"><span style="letter-spacing:1.35px">061</span><span style="letter-spacing:1.5px">T</span><span style="letter-spacing:1.35px">0402000</span><span style="letter-spacing:1.5px"> </span><span style="letter-spacing:1.2px">[</span><span style="letter-spacing:1.35px">0</span><span style="letter-spacing:0.3px">]</span></div>
<div class="t" style="left:450px;top:291.7px;color:#303030"><span style="letter-spacing:1.35px">061</span><span style="letter-spacing:1.5px">T</span><span style="letter-spacing:1.35px">0603103</span><span class="h">-</span><span class="h">-</span><span style="letter-spacing:-1px">Y</span><span style="letter-spacing:1.5px"> </span><span style="letter-spacing:1.2px">[</span><span style="letter-spacing:1.35px">0</span><span style="letter-spacing:0.3px">]</span></div>
<div class="t" style="left:450px;top:317.2px;color:#303030"><span style="letter-spacing:1.35px">061</span><span style="letter-spacing:1.5px">T</span><span style="letter-spacing:1.35px">0402750</span><span style="letter-spacing:1.5px"> </span><span style="letter-spacing:1.2px">[</span><span style="letter-spacing:1.35px">0</span><span style="letter-spacing:0.3px">]</span></div>
<div class="ab" style="left:452px;top:340.0px;width:16px;height:16px;border-radius:50%;background:#000"></div>
<div class="t" style="left:450px;top:368.2px;color:#303030"><span style="letter-spacing:1.35px">061</span><span style="letter-spacing:1.5px">T</span><span style="letter-spacing:1.35px">0402472</span><span style="letter-spacing:1.5px"> </span><span style="letter-spacing:1.2px">[</span><span style="letter-spacing:1.35px">0</span><span style="letter-spacing:0.3px">]</span></div>
<div class="t" style="left:450px;top:393.7px;color:#303030"><span style="letter-spacing:1.35px">073</span><span style="letter-spacing:1.5px">T</span><span class="h">-</span><span class="h">-</span><span style="letter-spacing:1.35px">63108</span><span class="h">-</span><span class="h">-</span><span style="letter-spacing:1.5px">T </span><span style="letter-spacing:1.2px">[</span><span style="letter-spacing:1.35px">0</span><span style="letter-spacing:0.3px">]</span></div>
<div class="t" style="left:450px;top:419.2px;color:#303030"><span style="letter-spacing:1.35px">061</span><span style="letter-spacing:1.5px">T</span><span style="letter-spacing:1.35px">0402103</span><span style="letter-spacing:1.5px"> </span><span style="letter-spacing:1.2px">[</span><span style="letter-spacing:1.35px">0</span><span style="letter-spacing:0.3px">]</span></div>
<div class="t" style="left:450px;top:444.7px;color:#303030"><span style="letter-spacing:1.35px">065</span><span style="letter-spacing:1.5px">T</span><span style="letter-spacing:1.35px">040210412</span><span style="letter-spacing:-0.2px">K</span><span class="h">-</span><span class="h">-</span><span class="h">-</span><span style="letter-spacing:-1px">Y</span><span style="letter-spacing:1.5px"> </span><span style="letter-spacing:1.2px">[</span><span style="letter-spacing:1.35px">0</span><span style="letter-spacing:0.3px">]</span></div>
<div class="t" style="left:450px;top:470.2px;color:#303030"><span style="letter-spacing:1.35px">065</span><span style="letter-spacing:1.5px">T</span><span style="letter-spacing:1.35px">040210412</span><span style="letter-spacing:-0.2px">K</span><span class="h">-</span><span class="h">-</span><span class="h">-</span><span style="letter-spacing:-1px">Y</span><span style="letter-spacing:1.5px"> </span><span style="letter-spacing:1.2px">[</span><span style="letter-spacing:1.35px">0</span><span style="letter-spacing:0.3px">]</span></div>
<div class="t" style="left:743px;top:189.7px;color:#303030"><span style="letter-spacing:1.35px">061</span><span style="letter-spacing:1.5px">T</span><span style="letter-spacing:1.35px">0402472</span><span style="letter-spacing:1.5px"> </span><span style="letter-spacing:1.2px">[</span><span style="letter-spacing:1.35px">0</span><span style="letter-spacing:0.3px">]</span></div>
<div class="t" style="left:743px;top:215.2px;color:#303030"><span style="letter-spacing:1.35px">073</span><span style="letter-spacing:1.5px">T</span><span class="h">-</span><span class="h">-</span><span style="letter-spacing:1.35px">63108</span><span class="h">-</span><span class="h">-</span><span style="letter-spacing:1.5px">T </span><span style="letter-spacing:1.2px">[</span><span style="letter-spacing:1.35px">0</span><span style="letter-spacing:0.3px">]</span></div>
<div class="t" style="left:743px;top:240.7px;color:#303030"><span style="letter-spacing:1.35px">061</span><span style="letter-spacing:1.5px">T</span><span style="letter-spacing:1.35px">0402103</span><span style="letter-spacing:1.5px"> </span><span style="letter-spacing:1.2px">[</span><span style="letter-spacing:1.35px">0</span><span style="letter-spacing:0.3px">]</span></div>
<div class="t" style="left:743px;top:266.2px;color:#303030"><span style="letter-spacing:1.35px">065</span><span style="letter-spacing:1.5px">T</span><span style="letter-spacing:1.35px">040210412</span><span style="letter-spacing:-0.2px">K</span><span class="h">-</span><span class="h">-</span><span class="h">-</span><span style="letter-spacing:-1px">Y</span><span style="letter-spacing:1.5px"> </span><span style="letter-spacing:1.2px">[</span><span style="letter-spacing:1.35px">0</span><span style="letter-spacing:0.3px">]</span></div>
<div class="t" style="left:743px;top:291.7px;color:#303030"><span style="letter-spacing:1.35px">065</span><span style="letter-spacing:1.5px">T</span><span style="letter-spacing:1.35px">040210412</span><span style="letter-spacing:-0.2px">K</span><span class="h">-</span><span class="h">-</span><span class="h">-</span><span style="letter-spacing:-1px">Y</span><span style="letter-spacing:1.5px"> </span><span style="letter-spacing:1.2px">[</span><span style="letter-spacing:1.35px">0</span><span style="letter-spacing:0.3px">]</span></div>
<div class="t" style="left:743px;top:317.2px;color:#303030"><span style="letter-spacing:1.35px">061</span><span style="letter-spacing:1.5px">T</span><span style="letter-spacing:1.35px">0402000</span><span style="letter-spacing:1.5px"> </span><span style="letter-spacing:1.2px">[</span><span style="letter-spacing:1.35px">0</span><span style="letter-spacing:0.3px">]</span></div>
<div class="ab" style="left:745px;top:340.0px;width:16px;height:16px;border-radius:50%;background:#000"></div>
<div class="t" style="left:743px;top:368.2px;color:#303030"><span style="letter-spacing:1.35px">061</span><span style="letter-spacing:1.5px">T</span><span style="letter-spacing:1.35px">0402472</span><span style="letter-spacing:1.5px"> </span><span style="letter-spacing:1.2px">[</span><span style="letter-spacing:1.35px">0</span><span style="letter-spacing:0.3px">]</span></div>
<div class="t" style="left:743px;top:393.7px;color:#303030"><span style="letter-spacing:1.35px">073</span><span style="letter-spacing:1.5px">T</span><span class="h">-</span><span class="h">-</span><span style="letter-spacing:1.35px">63108</span><span class="h">-</span><span class="h">-</span><span style="letter-spacing:1.5px">T </span><span style="letter-spacing:1.2px">[</span><span style="letter-spacing:1.35px">0</span><span style="letter-spacing:0.3px">]</span></div>
<div class="t" style="left:743px;top:419.2px;color:#303030"><span style="letter-spacing:1.35px">061</span><span style="letter-spacing:1.5px">T</span><span style="letter-spacing:1.35px">0402103</span><span style="letter-spacing:1.5px"> </span><span style="letter-spacing:1.2px">[</span><span style="letter-spacing:1.35px">0</span><span style="letter-spacing:0.3px">]</span></div>
<div class="t" style="left:743px;top:444.7px;color:#303030"><span style="letter-spacing:1.35px">065</span><span style="letter-spacing:1.5px">T</span><span style="letter-spacing:1.35px">040210412</span><span style="letter-spacing:-0.2px">K</span><span class="h">-</span><span class="h">-</span><span class="h">-</span><span style="letter-spacing:-1px">Y</span><span style="letter-spacing:1.5px"> </span><span style="letter-spacing:1.2px">[</span><span style="letter-spacing:1.35px">0</span><span style="letter-spacing:0.3px">]</span></div>
<div class="t" style="left:743px;top:470.2px;color:#303030"><span style="letter-spacing:1.35px">065</span><span style="letter-spacing:1.5px">T</span><span style="letter-spacing:1.35px">040210412</span><span style="letter-spacing:-0.2px">K</span><span class="h">-</span><span class="h">-</span><span class="h">-</span><span style="letter-spacing:-1px">Y</span><span style="letter-spacing:1.5px"> </span><span style="letter-spacing:1.2px">[</span><span style="letter-spacing:1.35px">0</span><span style="letter-spacing:0.3px">]</span></div>
<div class="t" style="left:1035.5px;top:189.7px;color:#303030"><span style="letter-spacing:1.35px">061</span><span style="letter-spacing:1.5px">T</span><span style="letter-spacing:1.35px">0402472</span><span style="letter-spacing:1.5px"> </span><span style="letter-spacing:1.2px">[</span><span style="letter-spacing:1.35px">0</span><span style="letter-spacing:0.3px">]</span></div>
<div class="t" style="left:1035.5px;top:215.2px;color:#303030"><span style="letter-spacing:1.35px">073</span><span style="letter-spacing:1.5px">T</span><span class="h">-</span><span class="h">-</span><span style="letter-spacing:1.35px">63108</span><span class="h">-</span><span class="h">-</span><span style="letter-spacing:1.5px">T </span><span style="letter-spacing:1.2px">[</span><span style="letter-spacing:1.35px">0</span><span style="letter-spacing:0.3px">]</span></div>
<div class="t" style="left:1035.5px;top:240.7px;color:#303030"><span style="letter-spacing:1.35px">061</span><span style="letter-spacing:1.5px">T</span><span style="letter-spacing:1.35px">0402103</span><span style="letter-spacing:1.5px"> </span><span style="letter-spacing:1.2px">[</span><span style="letter-spacing:1.35px">0</span><span style="letter-spacing:0.3px">]</span></div>
<div class="t" style="left:1035.5px;top:266.2px;color:#303030"><span style="letter-spacing:1.35px">065</span><span style="letter-spacing:1.5px">T</span><span style="letter-spacing:1.35px">040210412</span><span style="letter-spacing:-0.2px">K</span><span class="h">-</span><span class="h">-</span><span class="h">-</span><span style="letter-spacing:-1px">Y</span><span style="letter-spacing:1.5px"> </span><span style="letter-spacing:1.2px">[</span><span style="letter-spacing:1.35px">0</span><span style="letter-spacing:0.3px">]</span></div>
<div class="t" style="left:1035.5px;top:291.7px;color:#303030"><span style="letter-spacing:1.35px">065</span><span style="letter-spacing:1.5px">T</span><span style="letter-spacing:1.35px">040210412</span><span style="letter-spacing:-0.2px">K</span><span class="h">-</span><span class="h">-</span><span class="h">-</span><span style="letter-spacing:-1px">Y</span><span style="letter-spacing:1.5px"> </span><span style="letter-spacing:1.2px">[</span><span style="letter-spacing:1.35px">0</span><span style="letter-spacing:0.3px">]</span></div>
<div class="t" style="left:1035.5px;top:317.2px;color:#303030"><span style="letter-spacing:1.35px">061</span><span style="letter-spacing:1.5px">T</span><span style="letter-spacing:1.35px">0402000</span><span style="letter-spacing:1.5px"> </span><span style="letter-spacing:1.2px">[</span><span style="letter-spacing:1.35px">0</span><span style="letter-spacing:0.3px">]</span></div>
<div class="ab" style="left:1037.5px;top:340.0px;width:16px;height:16px;border-radius:50%;background:#000"></div>
<div class="t" style="left:1035.5px;top:368.2px;color:#303030"><span style="letter-spacing:1.35px">061</span><span style="letter-spacing:1.5px">T</span><span style="letter-spacing:1.35px">0402472</span><span style="letter-spacing:1.5px"> </span><span style="letter-spacing:1.2px">[</span><span style="letter-spacing:1.35px">0</span><span style="letter-spacing:0.3px">]</span></div>
<div class="t" style="left:1035.5px;top:393.7px;color:#303030"><span style="letter-spacing:1.35px">073</span><span style="letter-spacing:1.5px">T</span><span class="h">-</span><span class="h">-</span><span style="letter-spacing:1.35px">63108</span><span class="h">-</span><span class="h">-</span><span style="letter-spacing:1.5px">T </span><span style="letter-spacing:1.2px">[</span><span style="letter-spacing:1.35px">0</span><span style="letter-spacing:0.3px">]</span></div>
<div class="t" style="left:1035.5px;top:419.2px;color:#303030"><span style="letter-spacing:1.35px">061</span><span style="letter-spacing:1.5px">T</span><span style="letter-spacing:1.35px">0402103</span><span style="letter-spacing:1.5px"> </span><span style="letter-spacing:1.2px">[</span><span style="letter-spacing:1.35px">0</span><span style="letter-spacing:0.3px">]</span></div>
<div class="t" style="left:1035.5px;top:444.7px;color:#303030"><span style="letter-spacing:1.35px">065</span><span style="letter-spacing:1.5px">T</span><span style="letter-spacing:1.35px">040210412</span><span style="letter-spacing:-0.2px">K</span><span class="h">-</span><span class="h">-</span><span class="h">-</span><span style="letter-spacing:-1px">Y</span><span style="letter-spacing:1.5px"> </span><span style="letter-spacing:1.2px">[</span><span style="letter-spacing:1.35px">0</span><span style="letter-spacing:0.3px">]</span></div>
<div class="t" style="left:1035.5px;top:470.2px;color:#303030"><span style="letter-spacing:1.35px">065</span><span style="letter-spacing:1.5px">T</span><span style="letter-spacing:1.35px">040210412</span><span style="letter-spacing:-0.2px">K</span><span class="h">-</span><span class="h">-</span><span class="h">-</span><span style="letter-spacing:-1px">Y</span><span style="letter-spacing:1.5px"> </span><span style="letter-spacing:1.2px">[</span><span style="letter-spacing:1.35px">0</span><span style="letter-spacing:0.3px">]</span></div>
<div class="t" style="left:1035.5px;top:495.7px;color:#303030"><span style="letter-spacing:1.35px">061</span><span style="letter-spacing:1.5px">T</span><span style="letter-spacing:1.35px">0402000</span><span style="letter-spacing:1.5px"> </span><span style="letter-spacing:1.2px">[</span><span style="letter-spacing:1.35px">0</span><span style="letter-spacing:0.3px">]</span></div>
<div class="ab" style="left:1037.5px;top:518.5px;width:16px;height:16px;border-radius:50%;background:#000"></div>
<div class="t" style="left:1035.5px;top:546.7px;color:#303030"><span style="letter-spacing:1.35px">061</span><span style="letter-spacing:1.5px">T</span><span style="letter-spacing:1.35px">0402101</span><span style="letter-spacing:1.5px"> </span><span style="letter-spacing:1.2px">[</span><span style="letter-spacing:1.35px">0</span><span style="letter-spacing:0.3px">]</span></div>
<div class="t" style="left:1035.5px;top:572.2px;color:#303030"><span style="letter-spacing:1.35px">061</span><span style="letter-spacing:1.5px">T</span><span style="letter-spacing:1.35px">0402101</span><span style="letter-spacing:1.5px"> </span><span style="letter-spacing:1.2px">[</span><span style="letter-spacing:1.35px">0</span><span style="letter-spacing:0.3px">]</span></div>
<div class="t" style="left:1035.5px;top:597.7px;color:#303030"><span style="letter-spacing:1.35px">061</span><span style="letter-spacing:1.5px">T</span><span style="letter-spacing:1.35px">0603101</span><span style="letter-spacing:1.5px"> </span><span style="letter-spacing:1.2px">[</span><span style="letter-spacing:1.35px">0</span><span style="letter-spacing:0.3px">]</span></div>
<div class="t" style="left:1035.5px;top:623.2px;color:#303030"><span style="letter-spacing:1.35px">065</span><span style="letter-spacing:1.5px">T</span><span style="letter-spacing:1.35px">040210312</span><span style="letter-spacing:-0.2px">K</span><span class="h">-</span><span class="h">-</span><span class="h">-</span><span style="letter-spacing:-1px">Y</span><span style="letter-spacing:1.5px"> </span><span style="letter-spacing:1.2px">[</span><span style="letter-spacing:1.35px">0</span><span style="letter-spacing:0.3px">]</span></div>
<div class="t" style="left:1035.5px;top:648.7px;color:#303030"><span style="letter-spacing:1.35px">061</span><span style="letter-spacing:1.5px">T</span><span style="letter-spacing:1.35px">0603000</span><span style="letter-spacing:1.5px"> </span><span style="letter-spacing:1.2px">[</span><span style="letter-spacing:1.35px">0</span><span style="letter-spacing:0.3px">]</span></div>
<div class="t" style="left:1035.5px;top:674.2px;color:#303030"><span style="letter-spacing:1.35px">061</span><span style="letter-spacing:1.5px">T</span><span style="letter-spacing:1.35px">0603472</span><span style="letter-spacing:1.5px"> </span><span style="letter-spacing:1.2px">[</span><span style="letter-spacing:1.35px">0</span><span style="letter-spacing:0.3px">]</span></div>
<div class="ab" style="left:1037.5px;top:697.0px;width:16px;height:16px;border-radius:50%;background:#000"></div>
<div class="t" style="left:1035.5px;top:725.2px;color:#303030"><span style="letter-spacing:1.35px">061</span><span style="letter-spacing:1.5px">T</span><span style="letter-spacing:1.35px">0402101</span><span style="letter-spacing:1.5px"> </span><span style="letter-spacing:1.2px">[</span><span style="letter-spacing:1.35px">0</span><span style="letter-spacing:0.3px">]</span></div>
<div class="t" style="left:1035.5px;top:750.7px;color:#303030"><span style="letter-spacing:1.35px">061</span><span style="letter-spacing:1.5px">T</span><span style="letter-spacing:1.35px">0402101</span><span style="letter-spacing:1.5px"> </span><span style="letter-spacing:1.2px">[</span><span style="letter-spacing:1.35px">0</span><span style="letter-spacing:0.3px">]</span></div>
<div class="t" style="left:1035.5px;top:776.2px;color:#303030"><span style="letter-spacing:1.35px">061</span><span style="letter-spacing:1.5px">T</span><span style="letter-spacing:1.35px">0603101</span><span style="letter-spacing:1.5px"> </span><span style="letter-spacing:1.2px">[</span><span style="letter-spacing:1.35px">0</span><span style="letter-spacing:0.3px">]</span></div>
<div class="t" style="left:1035.5px;top:801.7px;color:#303030"><span style="letter-spacing:1.35px">065</span><span style="letter-spacing:1.5px">T</span><span style="letter-spacing:1.35px">040210312</span><span style="letter-spacing:-0.2px">K</span><span class="h">-</span><span class="h">-</span><span class="h">-</span><span style="letter-spacing:-1px">Y</span><span style="letter-spacing:1.5px"> </span><span style="letter-spacing:1.2px">[</span><span style="letter-spacing:1.35px">0</span><span style="letter-spacing:0.3px">]</span></div>
<div class="t" style="left:1035.5px;top:827.2px;color:#303030"><span style="letter-spacing:1.35px">061</span><span style="letter-spacing:1.5px">T</span><span style="letter-spacing:1.35px">0603000</span><span style="letter-spacing:1.5px"> </span><span style="letter-spacing:1.2px">[</span><span style="letter-spacing:1.35px">0</span><span style="letter-spacing:0.3px">]</span></div>
<div class="t" style="left:1035.5px;top:852.7px;color:#303030"><span style="letter-spacing:1.35px">061</span><span style="letter-spacing:1.5px">T</span><span style="letter-spacing:1.35px">0603472</span><span style="letter-spacing:1.5px"> </span><span style="letter-spacing:1.2px">[</span><span style="letter-spacing:1.35px">0</span><span style="letter-spacing:0.3px">]</span></div>
<div class="ab" style="left:1037.5px;top:875.5px;width:16px;height:16px;border-radius:50%;background:#000"></div>
<div class="t" style="left:1035.5px;top:903.7px;color:#303030"><span style="letter-spacing:1.35px">061</span><span style="letter-spacing:1.5px">T</span><span class="h">-</span><span style="letter-spacing:1.35px">126470</span><span class="h">-</span><span style="letter-spacing:1.35px">8</span><span style="letter-spacing:-1px">Y</span><span style="letter-spacing:1.5px"> </span><span style="letter-spacing:1.2px">[</span><span style="letter-spacing:1.35px">0</span><span style="letter-spacing:0.3px">]</span></div>
<div class="t" style="left:1035.5px;top:929.2px;color:#303030"><span style="letter-spacing:1.35px">061</span><span style="letter-spacing:1.5px">T</span><span style="letter-spacing:1.35px">0402470</span><span style="letter-spacing:1.5px"> </span><span style="letter-spacing:1.2px">[</span><span style="letter-spacing:1.35px">0</span><span style="letter-spacing:0.3px">]</span></div>
<div class="t" style="left:1035.5px;top:954.7px;color:#303030"><span style="letter-spacing:1.35px">061</span><span style="letter-spacing:1.5px">T</span><span style="letter-spacing:1.35px">0402102</span><span style="letter-spacing:1.5px"> </span><span style="letter-spacing:1.2px">[</span><span style="letter-spacing:1.35px">0</span><span style="letter-spacing:0.3px">]</span></div>
<div class="t" style="left:1035.5px;top:980.2px;color:#303030"><span style="letter-spacing:1.35px">061</span><span style="letter-spacing:1.5px">T</span><span class="h">-</span><span style="letter-spacing:1.35px">126470</span><span class="h">-</span><span style="letter-spacing:1.35px">8</span><span style="letter-spacing:-1px">Y</span><span style="letter-spacing:1.5px"> </span><span style="letter-spacing:1.2px">[</span><span style="letter-spacing:1.35px">0</span><span style="letter-spacing:0.3px">]</span></div>
<div class="t" style="left:1328.5px;top:189.7px;color:#303030"><span style="letter-spacing:1.35px">061</span><span style="letter-spacing:1.5px">T</span><span style="letter-spacing:1.35px">0402472</span><span style="letter-spacing:1.5px"> </span><span style="letter-spacing:1.2px">[</span><span style="letter-spacing:1.35px">0</span><span style="letter-spacing:0.3px">]</span></div>
<div class="t" style="left:1328.5px;top:215.2px;color:#303030"><span style="letter-spacing:1.35px">073</span><span style="letter-spacing:1.5px">T</span><span class="h">-</span><span class="h">-</span><span style="letter-spacing:1.35px">63108</span><span class="h">-</span><span class="h">-</span><span style="letter-spacing:1.5px">T </span><span style="letter-spacing:1.2px">[</span><span style="letter-spacing:1.35px">0</span><span style="letter-spacing:0.3px">]</span></div>
<div class="t" style="left:1328.5px;top:240.7px;color:#303030"><span style="letter-spacing:1.35px">061</span><span style="letter-spacing:1.5px">T</span><span style="letter-spacing:1.35px">0402103</span><span style="letter-spacing:1.5px"> </span><span style="letter-spacing:1.2px">[</span><span style="letter-spacing:1.35px">0</span><span style="letter-spacing:0.3px">]</span></div>
<div class="t" style="left:1328.5px;top:266.2px;color:#303030"><span style="letter-spacing:1.35px">065</span><span style="letter-spacing:1.5px">T</span><span style="letter-spacing:1.35px">040210412</span><span style="letter-spacing:-0.2px">K</span><span class="h">-</span><span class="h">-</span><span class="h">-</span><span style="letter-spacing:-1px">Y</span><span style="letter-spacing:1.5px"> </span><span style="letter-spacing:1.2px">[</span><span style="letter-spacing:1.35px">0</span><span style="letter-spacing:0.3px">]</span></div>
<div class="t" style="left:1328.5px;top:291.7px;color:#303030"><span style="letter-spacing:1.35px">065</span><span style="letter-spacing:1.5px">T</span><span style="letter-spacing:1.35px">040210412</span><span style="letter-spacing:-0.2px">K</span><span class="h">-</span><span class="h">-</span><span class="h">-</span><span style="letter-spacing:-1px">Y</span><span style="letter-spacing:1.5px"> </span><span style="letter-spacing:1.2px">[</span><span style="letter-spacing:1.35px">0</span><span style="letter-spacing:0.3px">]</span></div>
<div class="t" style="left:1328.5px;top:317.2px;color:#303030"><span style="letter-spacing:1.35px">061</span><span style="letter-spacing:1.5px">T</span><span style="letter-spacing:1.35px">0402000</span><span style="letter-spacing:1.5px"> </span><span style="letter-spacing:1.2px">[</span><span style="letter-spacing:1.35px">0</span><span style="letter-spacing:0.3px">]</span></div>
<div class="ab" style="left:1330.5px;top:340.0px;width:16px;height:16px;border-radius:50%;background:#000"></div>
<div class="t" style="left:1328.5px;top:368.2px;color:#303030"><span style="letter-spacing:1.35px">073</span><span style="letter-spacing:1.5px">T</span><span class="h">-</span><span class="h">-</span><span style="letter-spacing:1.35px">63108</span><span class="h">-</span><span class="h">-</span><span style="letter-spacing:1.5px">T </span><span style="letter-spacing:1.2px">[</span><span style="letter-spacing:1.35px">0</span><span style="letter-spacing:0.3px">]</span></div>
<div class="t" style="left:1328.5px;top:393.7px;color:#303030"><span style="letter-spacing:1.35px">061</span><span style="letter-spacing:1.5px">T</span><span style="letter-spacing:1.35px">0402103</span><span style="letter-spacing:1.5px"> </span><span style="letter-spacing:1.2px">[</span><span style="letter-spacing:1.35px">0</span><span style="letter-spacing:0.3px">]</span></div>
<div class="t" style="left:1328.5px;top:419.2px;color:#303030"><span style="letter-spacing:1.35px">065</span><span style="letter-spacing:1.5px">T</span><span style="letter-spacing:1.35px">040210412</span><span style="letter-spacing:-0.2px">K</span><span class="h">-</span><span class="h">-</span><span class="h">-</span><span style="letter-spacing:-1px">Y</span><span style="letter-spacing:1.5px"> </span><span style="letter-spacing:1.2px">[</span><span style="letter-spacing:1.35px">0</span><span style="letter-spacing:0.3px">]</span></div>
<div class="t" style="left:1328.5px;top:444.7px;color:#303030"><span style="letter-spacing:1.35px">061</span><span style="letter-spacing:1.5px">T</span><span style="letter-spacing:1.35px">0402103</span><span style="letter-spacing:1.5px"> </span><span style="letter-spacing:1.2px">[</span><span style="letter-spacing:1.35px">0</span><span style="letter-spacing:0.3px">]</span></div>
<div class="t" style="left:1328.5px;top:470.2px;color:#303030"><span style="letter-spacing:1.35px">065</span><span style="letter-spacing:1.5px">T</span><span style="letter-spacing:1.35px">040210412</span><span style="letter-spacing:-0.2px">K</span><span class="h">-</span><span class="h">-</span><span class="h">-</span><span style="letter-spacing:-1px">Y</span><span style="letter-spacing:1.5px"> </span><span style="letter-spacing:1.2px">[</span><span style="letter-spacing:1.35px">0</span><span style="letter-spacing:0.3px">]</span></div>
<div class="t" style="left:1328.5px;top:495.7px;color:#303030"><span style="letter-spacing:1.35px">065</span><span style="letter-spacing:1.5px">T</span><span style="letter-spacing:1.35px">040210412</span><span style="letter-spacing:-0.2px">K</span><span class="h">-</span><span class="h">-</span><span class="h">-</span><span style="letter-spacing:-1px">Y</span><span style="letter-spacing:1.5px"> </span><span style="letter-spacing:1.2px">[</span><span style="letter-spacing:1.35px">0</span><span style="letter-spacing:0.3px">]</span></div>
<div class="ab" style="left:1330.5px;top:518.5px;width:16px;height:16px;border-radius:50%;background:#888"></div>
<div class="t" style="left:1328.5px;top:546.7px;color:#303030"><span style="letter-spacing:1.35px">061</span><span style="letter-spacing:1.5px">T</span><span style="letter-spacing:1.35px">0402101</span><span style="letter-spacing:1.5px"> </span><span style="letter-spacing:1.2px">[</span><span style="letter-spacing:1.35px">0</span><span style="letter-spacing:0.3px">]</span></div>
<div class="t" style="left:1328.5px;top:572.2px;color:#303030"><span style="letter-spacing:1.35px">061</span><span style="letter-spacing:1.5px">T</span><span style="letter-spacing:1.35px">0402101</span><span style="letter-spacing:1.5px"> </span><span style="letter-spacing:1.2px">[</span><span style="letter-spacing:1.35px">0</span><span style="letter-spacing:0.3px">]</span></div>
<div class="t" style="left:1328.5px;top:597.7px;color:#303030"><span style="letter-spacing:1.35px">061</span><span style="letter-spacing:1.5px">T</span><span style="letter-spacing:1.35px">0603101</span><span style="letter-spacing:1.5px"> </span><span style="letter-spacing:1.2px">[</span><span style="letter-spacing:1.35px">0</span><span style="letter-spacing:0.3px">]</span></div>
<div class="t" style="left:1328.5px;top:623.2px;color:#303030"><span style="letter-spacing:1.35px">065</span><span style="letter-spacing:1.5px">T</span><span style="letter-spacing:1.35px">040210312</span><span style="letter-spacing:-0.2px">K</span><span class="h">-</span><span class="h">-</span><span class="h">-</span><span style="letter-spacing:-1px">Y</span><span style="letter-spacing:1.5px"> </span><span style="letter-spacing:1.2px">[</span><span style="letter-spacing:1.35px">0</span><span style="letter-spacing:0.3px">]</span></div>
<div class="t" style="left:1328.5px;top:648.7px;color:#303030"><span style="letter-spacing:1.35px">061</span><span style="letter-spacing:1.5px">T</span><span style="letter-spacing:1.35px">0603000</span><span style="letter-spacing:1.5px"> </span><span style="letter-spacing:1.2px">[</span><span style="letter-spacing:1.35px">0</span><span style="letter-spacing:0.3px">]</span></div>
<div class="t" style="left:1328.5px;top:674.2px;color:#303030"><span style="letter-spacing:1.35px">061</span><span style="letter-spacing:1.5px">T</span><span style="letter-spacing:1.35px">0603472</span><span style="letter-spacing:1.5px"> </span><span style="letter-spacing:1.2px">[</span><span style="letter-spacing:1.35px">0</span><span style="letter-spacing:0.3px">]</span></div>
<div class="ab" style="left:1330.5px;top:697.0px;width:16px;height:16px;border-radius:50%;background:#000"></div>
<div class="t" style="left:1328.5px;top:725.2px;color:#303030"><span style="letter-spacing:1.35px">061</span><span style="letter-spacing:1.5px">T</span><span style="letter-spacing:1.35px">0402101</span><span style="letter-spacing:1.5px"> </span><span style="letter-spacing:1.2px">[</span><span style="letter-spacing:1.35px">0</span><span style="letter-spacing:0.3px">]</span></div>
<div class="t" style="left:1328.5px;top:750.7px;color:#303030"><span style="letter-spacing:1.35px">061</span><span style="letter-spacing:1.5px">T</span><span style="letter-spacing:1.35px">0402101</span><span style="letter-spacing:1.5px"> </span><span style="letter-spacing:1.2px">[</span><span style="letter-spacing:1.35px">0</span><span style="letter-spacing:0.3px">]</span></div>
<div class="t" style="left:1328.5px;top:776.2px;color:#303030"><span style="letter-spacing:1.35px">061</span><span style="letter-spacing:1.5px">T</span><span style="letter-spacing:1.35px">0603101</span><span style="letter-spacing:1.5px"> </span><span style="letter-spacing:1.2px">[</span><span style="letter-spacing:1.35px">0</span><span style="letter-spacing:0.3px">]</span></div>
<div class="t" style="left:1328.5px;top:801.7px;color:#303030"><span style="letter-spacing:1.35px">065</span><span style="letter-spacing:1.5px">T</span><span style="letter-spacing:1.35px">040210312</span><span style="letter-spacing:-0.2px">K</span><span class="h">-</span><span class="h">-</span><span class="h">-</span><span style="letter-spacing:-1px">Y</span><span style="letter-spacing:1.5px"> </span><span style="letter-spacing:1.2px">[</span><span style="letter-spacing:1.35px">0</span><span style="letter-spacing:0.3px">]</span></div>
<div class="t" style="left:1328.5px;top:827.2px;color:#303030"><span style="letter-spacing:1.35px">061</span><span style="letter-spacing:1.5px">T</span><span style="letter-spacing:1.35px">0603000</span><span style="letter-spacing:1.5px"> </span><span style="letter-spacing:1.2px">[</span><span style="letter-spacing:1.35px">0</span><span style="letter-spacing:0.3px">]</span></div>
<div class="t" style="left:1328.5px;top:852.7px;color:#303030"><span style="letter-spacing:1.35px">061</span><span style="letter-spacing:1.5px">T</span><span style="letter-spacing:1.35px">0603472</span><span style="letter-spacing:1.5px"> </span><span style="letter-spacing:1.2px">[</span><span style="letter-spacing:1.35px">0</span><span style="letter-spacing:0.3px">]</span></div>
<div class="ab" style="left:1330.5px;top:875.5px;width:16px;height:16px;border-radius:50%;background:#000"></div>
<div class="t" style="left:1328.5px;top:903.7px;color:#303030"><span style="letter-spacing:1.35px">061</span><span style="letter-spacing:1.5px">T</span><span class="h">-</span><span style="letter-spacing:1.35px">126470</span><span class="h">-</span><span style="letter-spacing:1.35px">8</span><span style="letter-spacing:-1px">Y</span><span style="letter-spacing:1.5px"> </span><span style="letter-spacing:1.2px">[</span><span style="letter-spacing:1.35px">0</span><span style="letter-spacing:0.3px">]</span></div>
<div class="t" style="left:1328.5px;top:929.2px;color:#303030"><span style="letter-spacing:1.35px">061</span><span style="letter-spacing:1.5px">T</span><span style="letter-spacing:1.35px">0402470</span><span style="letter-spacing:1.5px"> </span><span style="letter-spacing:1.2px">[</span><span style="letter-spacing:1.35px">0</span><span style="letter-spacing:0.3px">]</span></div>
<div class="t" style="left:1328.5px;top:954.7px;color:#303030"><span style="letter-spacing:1.35px">061</span><span style="letter-spacing:1.5px">T</span><span style="letter-spacing:1.35px">0402102</span><span style="letter-spacing:1.5px"> </span><span style="letter-spacing:1.2px">[</span><span style="letter-spacing:1.35px">0</span><span style="letter-spacing:0.3px">]</span></div>
<div class="t" style="left:1328.5px;top:980.2px;color:#303030"><span style="letter-spacing:1.35px">061</span><span style="letter-spacing:1.5px">T</span><span class="h">-</span><span style="letter-spacing:1.35px">126470</span><span class="h">-</span><span style="letter-spacing:1.35px">8</span><span style="letter-spacing:-1px">Y</span><span style="letter-spacing:1.5px"> </span><span style="letter-spacing:1.2px">[</span><span style="letter-spacing:1.35px">0</span><span style="letter-spacing:0.3px">]</span></div>
<div class="ab" style="left:446.5px;top:182.5px;width:292.5px;height:25px;border:2px solid #C08A3A"></div>
<div class="ab" style="left:446.5px;top:182.5px;width:292.5px;height:25px;border:2px dotted #201A10"></div>
<div class="ab" style="left:0;top:999.5px;width:1440px;height:3.5px;background:#FFFBEC"></div>
<div class="ab" style="left:1032px;top:999.5px;width:408px;height:3.5px;background:#99DDFF"></div>
<div class="ab" style="left:0;top:1003px;width:1440px;height:32px;background:linear-gradient(#F1EDE8 0px,#EFEEE8 3px,#F8F8F4 8px,#FFFFFF 18px,#FAF9F2 25px,#ECEAE0 30px)"></div>
<div class="ab" style="left:-10px;top:1005px;width:20px;height:23px;background:linear-gradient(90deg,#C8D6F8,#B4C8F4);border:1px solid #A0B4E4;border-radius:3px"></div>
<div class="ab" style="left:1429.5px;top:1005px;width:20px;height:23px;background:linear-gradient(90deg,#C8D6F8,#B4C8F4);border:1px solid #A0B4E4;border-radius:3px"></div>
<div class="ab" style="left:0;top:1034.5px;width:1440px;height:2px;background:#A6A393"></div>
<div class="ab" style="left:0;top:1036.5px;width:1440px;height:29px;background:#ECE9D8"></div>
<div class="ab" style="left:0;top:1040px;width:1440px;height:1.5px;background:#CAC6B4"></div>
<div class="ab" style="left:0;top:1040.5px;width:55px;height:24px;border-top:1px solid #C8C5B6;border-right:1.5px solid #C8C5B6"></div>
<div class="ab" style="left:60px;top:1040.5px;width:345px;height:24px;border-top:1px solid #C8C5B6;border-left:1.5px solid #A8A594;border-right:1.5px solid #FFF"></div>
<div class="t" style="left:-2px;top:1045px;font-size:15.5px;letter-spacing:0.6px">91</div>
<div class="t" style="left:62px;top:1045px;font-size:15.5px;letter-spacing:-0.1px">Parts Name</div>
<svg class="ab" style="left:0;top:0" width="1440" height="300" viewBox="0 0 1440 300">
<path d="M817,29.5 H1100 Q1118,29.5 1118,47.5 V107 Q1118,125 1100,125 H931 L805,241 L852.5,125 H817.5 Q799.5,125 799.5,107 V47.5 Q799.5,29.5 817.5,29.5 Z" fill="#FF99CC" stroke="#2B2B2B" stroke-width="1.6" stroke-linejoin="round"/>
</svg>
<div class="ab" style="left:423.2px;top:464.8px;width:608.0999999999999px;height:615.2px;background:linear-gradient(90deg,#0842D6,#0A4CEB 2%,#0A4CEB 98%,#0846E0);border-radius:9px 9px 0 0;overflow:hidden">
<div class="ab" style="left:0;top:0;width:100%;height:45px;background:linear-gradient(#3C8CF8 0px,#0A5EF6 4px,#0858F0 9px,#0454EC 30px,#0246D8 41px,#0B4BDA 45px)"></div>
</div>
<svg class="ab" style="left:432.2px;top:477.3px" width="24" height="24" viewBox="0 0 24 24">
<rect x="0" y="0" width="23.6" height="23.4" fill="#000"/>
<rect x="2.5" y="2.5" width="18.6" height="18.4" fill="#F2F2F2"/>
<g stroke="#000" stroke-width="1.7" fill="none" stroke-linecap="square">
<path d="M5.2,5.2 H9 L6.5,8"/>
<path d="M5.6,8.6 V18.6 M11.2,8.6 V18.6 M8.4,8.6 V18.6 M5.6,8.6 H11.2 M5.6,11.6 H11.2 M5.6,14.4 H11.2"/>
<path d="M13,5.6 H18.4 V8.6 M16,6.5 L13.6,10.2"/>
<path d="M13,12.6 H19.2 M12.6,15.4 H19.2 M15.8,10.6 V19"/>
</g></svg>
<div class="t b" style="left:463px;top:480.8px;color:#fff;font-size:19.5px;letter-spacing:-0.3px;margin:0">Info</div>
<div class="ab" style="left:922px;top:474.5px;width:30.5px;height:30.5px;border:1.5px solid #F2F4FA;border-radius:4px;background:radial-gradient(circle at 30% 25%,#5D95FA,#2C6AF0 55%,#1F58E0)"><div class="ab" style="left:6px;top:19px;width:10px;height:4px;background:#fff"></div></div>
<div class="ab" style="left:956px;top:474.5px;width:30.5px;height:30.5px;border:1.5px solid #F2F4FA;border-radius:4px;background:radial-gradient(circle at 30% 25%,#5D95FA,#2C6AF0 55%,#1F58E0)"><div class="ab" style="left:6.5px;top:6px;width:15.5px;height:15.5px;border:1.5px solid #fff;border-top-width:3.5px"></div></div>
<div class="ab" style="left:991px;top:474.5px;width:30.5px;height:30.5px;border:1.5px solid #F2F4FA;border-radius:4px;background:radial-gradient(circle at 30% 25%,#F08A6A,#E0552E 55%,#D0401A)"><svg class="ab" style="left:5px;top:5px" width="18" height="18"><path d="M2.5,2.5 L15.5,15.5 M15.5,2.5 L2.5,15.5" stroke="#fff" stroke-width="2.6"/></svg></div>
<div class="ab" style="left:428.8px;top:509.5px;width:595.6px;height:571px;background:#FCFAF0"></div>
<div class="ab" style="left:432px;top:512.5px;width:592px;height:2px;background:#8E8C80"></div>
<div class="ab" style="left:432px;top:512.5px;width:2px;height:570px;background:#8E8C80"></div>
<div class="ab" style="left:434px;top:514.5px;width:572px;height:25.5px;background:#FFFF66"></div>
<div class="ab" style="left:434px;top:539.0px;width:572px;height:1.5px;background:#C9C6BC"></div>
<div class="t" style="left:436px;top:521.7px;"><span style="letter-spacing:-1px">P</span><span style="letter-spacing:0.4px">arts</span><span style="letter-spacing:-1px">N</span><span style="letter-spacing:0.4px">ame</span></div>
<div class="t" style="left:789px;top:521.7px;"><span style="letter-spacing:1.35px">061</span><span style="letter-spacing:1.5px">T</span><span style="letter-spacing:1.35px">0402103</span><span style="letter-spacing:1.5px"> </span><span style="letter-spacing:1.2px">[</span><span style="letter-spacing:1.35px">0</span><span style="letter-spacing:0.3px">]</span></div>
<div class="ab" style="left:434px;top:540.0px;width:351.5px;height:25.5px;background:#FDFBF0"></div>
<div class="ab" style="left:785.5px;top:540.0px;width:220.5px;height:25.5px;background:#F8F6EF"></div>
<div class="ab" style="left:434px;top:564.5px;width:572px;height:1.5px;background:#C9C6BC"></div>
<div class="t" style="left:436px;top:547.2px;"><span style="letter-spacing:-0.8px">C</span><span style="letter-spacing:0.4px">hip</span><span style="letter-spacing:-1px">N</span><span style="letter-spacing:0.4px">ame</span></div>
<div class="t" style="left:789px;top:547.2px;"><span style="letter-spacing:-2px">R</span><span style="letter-spacing:-0.8px">C</span><span style="letter-spacing:1.35px">051005</span><span style="letter-spacing:-0.5px">D</span><span style="letter-spacing:1.35px">0</span></div>
<div class="ab" style="left:434px;top:565.5px;width:572px;height:25.5px;background:#FFFF66"></div>
<div class="ab" style="left:434px;top:590.0px;width:572px;height:1.5px;background:#C9C6BC"></div>
<div class="t b" style="left:436px;top:572.7px;">L</div>
<div class="t b" style="left:789px;top:572.7px;"><span style="letter-spacing:0.8px">1</span><span style="letter-spacing:1.6px">.</span><span style="letter-spacing:0.8px">000</span><span style="letter-spacing:1.6px"> [</span><span style="letter-spacing:0.8px">1</span><span style="letter-spacing:1.6px">.</span><span style="letter-spacing:0.8px">000</span><span style="letter-spacing:1.6px">]</span></div>
<div class="ab" style="left:434px;top:591.0px;width:572px;height:25.5px;background:#FFFF66"></div>
<div class="ab" style="left:434px;top:615.5px;width:572px;height:1.5px;background:#C9C6BC"></div>
<div class="t b" style="left:436px;top:598.2px;">W</div>
<div class="t b" style="left:789px;top:598.2px;"><span style="letter-spacing:0.8px">0</span><span style="letter-spacing:1.6px">.</span><span style="letter-spacing:0.8px">500</span><span style="letter-spacing:1.6px"> [</span><span style="letter-spacing:0.8px">0</span><span style="letter-spacing:1.6px">.</span><span style="letter-spacing:0.8px">500</span><span style="letter-spacing:1.6px">]</span></div>
<div class="ab" style="left:434px;top:616.5px;width:572px;height:25.5px;background:#FFFF66"></div>
<div class="ab" style="left:434px;top:641.0px;width:572px;height:1.5px;background:#C9C6BC"></div>
<div class="t b" style="left:436px;top:623.7px;">T</div>
<div class="t b" style="left:789px;top:623.7px;"><span style="letter-spacing:0.8px">0</span><span style="letter-spacing:1.6px">.</span><span style="letter-spacing:0.8px">350</span></div>
<div class="ab" style="left:434px;top:642.0px;width:351.5px;height:25.5px;background:#FDFBF0"></div>
<div class="ab" style="left:785.5px;top:642.0px;width:220.5px;height:25.5px;background:#F8F6EF"></div>
<div class="ab" style="left:434px;top:666.5px;width:572px;height:1.5px;background:#C9C6BC"></div>
<div class="t" style="left:436px;top:649.2px;"><span style="letter-spacing:-2px">R</span><span style="letter-spacing:0.4px">ef</span></div>
<div class="t" style="left:789px;top:649.2px;"><span style="letter-spacing:1.35px">55</span></div>
<div class="ab" style="left:434px;top:667.5px;width:572px;height:25.5px;background:#FFFF66"></div>
<div class="ab" style="left:434px;top:692.0px;width:572px;height:1.5px;background:#C9C6BC"></div>
<div class="t" style="left:436px;top:674.7px;"><span style="letter-spacing:-0.2px">K</span><span style="letter-spacing:0.4px">ind</span></div>
<div class="t" style="left:789px;top:674.7px;">F<span style="letter-spacing:0.4px">ixed</span><span style="letter-spacing:-2px">R</span><span style="letter-spacing:0.4px">esistor</span><span style="letter-spacing:0.3px">(</span><span style="letter-spacing:1.35px">1</span><span style="letter-spacing:0.3px">)</span></div>
<div class="ab" style="left:434px;top:693.0px;width:351.5px;height:25.5px;background:#FDFBF0"></div>
<div class="ab" style="left:785.5px;top:693.0px;width:220.5px;height:25.5px;background:#F8F6EF"></div>
<div class="ab" style="left:434px;top:717.5px;width:572px;height:1.5px;background:#C9C6BC"></div>
<div class="t" style="left:436px;top:700.2px;"><span style="letter-spacing:1.5px">T</span>GA<span style="letter-spacing:-1px">P</span></div>
<div class="t" style="left:789px;top:700.2px;"><span style="letter-spacing:1.35px">0</span><span style="letter-spacing:0.3px">.</span><span style="letter-spacing:1.35px">100</span></div>
<div class="ab" style="left:434px;top:718.5px;width:351.5px;height:25.5px;background:#FDFBF0"></div>
<div class="ab" style="left:785.5px;top:718.5px;width:220.5px;height:25.5px;background:#F8F6EF"></div>
<div class="ab" style="left:434px;top:743.0px;width:572px;height:1.5px;background:#C9C6BC"></div>
<div class="t" style="left:436px;top:725.7px;">MGA<span style="letter-spacing:-1px">P</span></div>
<div class="t" style="left:789px;top:725.7px;"><span style="letter-spacing:1.35px">0</span><span style="letter-spacing:0.3px">.</span><span style="letter-spacing:1.35px">200</span></div>
<div class="ab" style="left:434px;top:744.0px;width:351.5px;height:25.5px;background:#FDFBF0"></div>
<div class="ab" style="left:785.5px;top:744.0px;width:220.5px;height:25.5px;background:#F8F6EF"></div>
<div class="ab" style="left:434px;top:768.5px;width:572px;height:1.5px;background:#C9C6BC"></div>
<div class="t" style="left:436px;top:751.2px;"><span style="letter-spacing:-1px">N</span><span style="letter-spacing:-2px">R</span></div>
<div class="t" style="left:789px;top:751.2px;"><span style="letter-spacing:1.35px">10000</span></div>
<div class="ab" style="left:434px;top:769.5px;width:351.5px;height:25.5px;background:#FDFBF0"></div>
<div class="ab" style="left:785.5px;top:769.5px;width:220.5px;height:25.5px;background:#F8F6EF"></div>
<div class="ab" style="left:434px;top:794.0px;width:572px;height:1.5px;background:#C9C6BC"></div>
<div class="t" style="left:436px;top:776.7px;"><span style="letter-spacing:-0.8px">C</span><span style="letter-spacing:0.4px">hip</span>E<span style="letter-spacing:0.4px">x</span></div>
<div class="t" style="left:789px;top:776.7px;"><span style="letter-spacing:-1px">N</span><span style="letter-spacing:0.4px">one</span></div>
<div class="ab" style="left:434px;top:795.0px;width:572px;height:25.5px;background:#FFFF66"></div>
<div class="ab" style="left:434px;top:819.5px;width:572px;height:1.5px;background:#C9C6BC"></div>
<div class="t" style="left:436px;top:802.2px;"><span style="letter-spacing:-1px">N</span><span style="letter-spacing:0.4px">ozzle</span>A</div>
<div class="t" style="left:789px;top:802.2px;"><span style="letter-spacing:1.35px">110</span></div>
<div class="ab" style="left:434px;top:820.5px;width:572px;height:25.5px;background:#FFFF66"></div>
<div class="ab" style="left:434px;top:845.0px;width:572px;height:1.5px;background:#C9C6BC"></div>
<div class="t" style="left:436px;top:827.7px;"><span style="letter-spacing:-1px">N</span><span style="letter-spacing:0.4px">ozzle</span>B</div>
<div class="t" style="left:789px;top:827.7px;"><span style="letter-spacing:1.35px">0</span></div>
<div class="ab" style="left:434px;top:846.0px;width:572px;height:25.5px;background:#FFFF66"></div>
<div class="ab" style="left:434px;top:870.5px;width:572px;height:1.5px;background:#C9C6BC"></div>
<div class="t" style="left:436px;top:853.2px;"><span style="letter-spacing:-1px">N</span><span style="letter-spacing:0.4px">ozzle</span><span style="letter-spacing:-0.8px">C</span></div>
<div class="t" style="left:789px;top:853.2px;"><span style="letter-spacing:1.35px">0</span></div>
<div class="ab" style="left:434px;top:871.5px;width:572px;height:25.5px;background:#FFFF66"></div>
<div class="ab" style="left:434px;top:896.0px;width:572px;height:1.5px;background:#C9C6BC"></div>
<div class="t" style="left:436px;top:878.7px;"><span style="letter-spacing:-1px">N</span><span style="letter-spacing:0.4px">ozzle</span><span style="letter-spacing:-0.5px">D</span></div>
<div class="t" style="left:789px;top:878.7px;"><span style="letter-spacing:1.35px">0</span></div>
<div class="ab" style="left:434px;top:897.0px;width:572px;height:25.5px;background:#FFFF66"></div>
<div class="ab" style="left:434px;top:921.5px;width:572px;height:1.5px;background:#C9C6BC"></div>
<div class="t" style="left:436px;top:904.2px;"><span style="letter-spacing:-1px">N</span><span style="letter-spacing:0.4px">ozzle</span>E</div>
<div class="t" style="left:789px;top:904.2px;"><span style="letter-spacing:1.35px">0</span></div>
<div class="ab" style="left:434px;top:922.5px;width:351.5px;height:25.5px;background:#FDFBF0"></div>
<div class="ab" style="left:785.5px;top:922.5px;width:220.5px;height:25.5px;background:#F8F6EF"></div>
<div class="ab" style="left:434px;top:947.0px;width:572px;height:1.5px;background:#C9C6BC"></div>
<div class="t" style="left:436px;top:929.7px;"><span style="letter-spacing:-1px">P</span><span style="letter-spacing:0.4px">ack</span></div>
<div class="t" style="left:789px;top:929.7px;"><span style="letter-spacing:1.35px">90</span></div>
<div class="ab" style="left:434px;top:948.0px;width:351.5px;height:25.5px;background:#FDFBF0"></div>
<div class="ab" style="left:785.5px;top:948.0px;width:220.5px;height:25.5px;background:#F8F6EF"></div>
<div class="ab" style="left:434px;top:972.5px;width:572px;height:1.5px;background:#C9C6BC"></div>
<div class="t" style="left:436px;top:955.2px;"><span style="letter-spacing:-2px">R</span><span style="letter-spacing:0.4px">etry</span></div>
<div class="t" style="left:789px;top:955.2px;"><span style="letter-spacing:1.35px">3</span></div>
<div class="ab" style="left:434px;top:973.5px;width:351.5px;height:25.5px;background:#FDFBF0"></div>
<div class="ab" style="left:785.5px;top:973.5px;width:220.5px;height:25.5px;background:#F8F6EF"></div>
<div class="ab" style="left:434px;top:998.0px;width:572px;height:1.5px;background:#C9C6BC"></div>
<div class="t" style="left:436px;top:980.7px;"><span style="letter-spacing:-0.8px">C</span></div>
<div class="t" style="left:789px;top:980.7px;"><span style="letter-spacing:-2px">R</span><span style="letter-spacing:1.35px">436</span></div>
<div class="ab" style="left:434px;top:999.0px;width:572px;height:25.5px;background:#FFFF66"></div>
<div class="ab" style="left:434px;top:1023.5px;width:572px;height:1.5px;background:#C9C6BC"></div>
<div class="t" style="left:436px;top:1006.2px;">X</div>
<div class="t" style="left:789px;top:1006.2px;"><span style="letter-spacing:1.35px">15</span><span style="letter-spacing:0.3px">.</span><span style="letter-spacing:1.35px">562</span></div>
<div class="ab" style="left:434px;top:1024.5px;width:572px;height:25.5px;background:#FFFF66"></div>
<div class="ab" style="left:434px;top:1049.0px;width:572px;height:1.5px;background:#C9C6BC"></div>
<div class="t" style="left:436px;top:1031.7px;"><span style="letter-spacing:-1px">Y</span></div>
<div class="t" style="left:789px;top:1031.7px;"><span style="letter-spacing:1.35px">55</span><span style="letter-spacing:0.3px">.</span><span style="letter-spacing:1.35px">732</span></div>
<div class="ab" style="left:434px;top:1050.0px;width:572px;height:25.5px;background:#FFFF66"></div>
<div class="ab" style="left:434px;top:1074.5px;width:572px;height:1.5px;background:#C9C6BC"></div>
<div class="t" style="left:436px;top:1057.2px;">A</div>
<div class="t" style="left:789px;top:1057.2px;"><span class="h">-</span><span style="letter-spacing:1.35px">90</span><span style="letter-spacing:0.3px">.</span><span style="letter-spacing:1.35px">000</span></div>
<div class="ab" style="left:785px;top:514.5px;width:1.5px;height:570px;background:#C4C2C8"></div>
<div class="ab" style="left:1005.3px;top:514.5px;width:1.5px;height:570px;background:#C4C2C8"></div>
<div class="ab" style="left:787px;top:795.3px;width:218.5px;height:24.5px;border:1.5px dotted #333"></div>
<div class="ab" style="left:1028.8px;top:490px;width:2.5px;height:590px;background:#0A38C4"></div>
<div class="ab" style="left:0;top:1065.5px;width:1440px;height:15px;background:linear-gradient(#3A7BE8,#2E64D6)"></div>
<div class="ab" style="left:0;top:1071.5px;width:92px;height:9px;background:linear-gradient(#3C9B3C,#4CAF4C);border-top-right-radius:8px"></div>
<div class="ab" style="left:1296px;top:1072px;width:144px;height:8px;background:linear-gradient(#0C9CE6,#14B0F0);border-left:1.5px solid #1A50B0"></div>
<div class="ab" style="left:0;top:1063px;width:423px;height:2.5px;background:#FAF6EC"></div>
<div class="ab" style="left:1031.3px;top:1063px;width:409px;height:2.5px;background:#FAF6EC"></div>
</body></html>
